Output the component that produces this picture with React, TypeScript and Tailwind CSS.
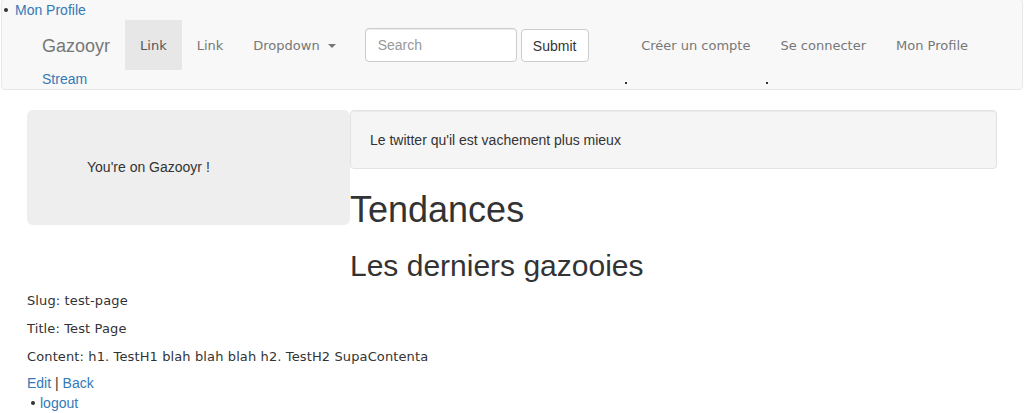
import React from "react";

const helv = { fontFamily: '"Liberation Sans", Arial, sans-serif' };
const verd = { fontFamily: '"DejaVu Sans", Verdana, sans-serif' };

export default function App() {
  return (
    <div className="w-[1024px] min-h-[413px] bg-white text-[#333] text-[14px] leading-[20px]" style={helv}>
      {/* Navbar */}
      <div className="mx-[1px] mb-[20px] h-[91px] -mt-[1px] border border-[#e7e7e7] bg-[#f8f8f8] rounded-[4px] flex flex-col">
        <div className="h-[20px] flex items-center pl-[1px]">
          <span className="w-[4px] h-[4px] rounded-full bg-[#333] ml-[1px]" />
          <a className="ml-[7px] text-[#337ab7] text-[14px] leading-[20px]">Mon Profile</a>
        </div>
        <div className="h-[50px] flex items-stretch pl-[25px]">
          <div className="px-[15px] pt-[1px] flex items-center text-[18px] text-[#777]">Gazooyr</div>
          <div className="flex items-stretch text-[13px]" style={verd}>
            <div className="px-[15px] pt-[1px] flex items-center bg-[#e7e7e7] text-[#555]">Link</div>
            <div className="px-[15px] pt-[1px] flex items-center text-[#777]">Link</div>
            <div className="px-[15px] pt-[1px] flex items-center text-[#777]">
              Dropdown
              <span className="ml-[8px] w-0 h-0 border-l-[4px] border-r-[4px] border-t-[4px] border-l-transparent border-r-transparent border-t-[#777]" />
            </div>
          </div>
          <div className="pl-[14px] flex items-center gap-[4px]">
            <input
              placeholder="Search"
              className="w-[152px] h-[34px] px-[12px] border border-[#ccc] rounded-[4px] bg-white text-[14px] placeholder:text-[#999] outline-none shadow-[inset_0_1px_1px_rgba(0,0,0,0.075)]"
              style={helv}
            />
            <button className="w-[68px] h-[33px] mt-[1px] border border-[#ccc] rounded-[4px] bg-white text-[14px] text-[#333]" style={helv}>
              Submit
            </button>
          </div>
          <div className="ml-auto mr-[39px] flex items-stretch text-[13px] text-[#777]" style={verd}>
            <div className="px-[15px] pt-[1px] flex items-center">Créer un compte</div>
            <div className="px-[15px] pt-[1px] flex items-center">Se connecter</div>
            <div className="px-[15px] pt-[1px] flex items-center">Mon Profile</div>
          </div>
        </div>
        <div className="h-[19px] flex items-center">
          <a className="ml-[40px] text-[#337ab7] leading-[18px] -mt-[1px]">Stream</a>
          <span className="ml-[538px] mt-[6px] w-[2px] h-[2px] bg-[#333]" />
          <span className="ml-[139px] mt-[6px] w-[2px] h-[2px] bg-[#333]" />
        </div>
      </div>

      {/* Content */}
      <div className="pl-[27px] w-[997px]">
        <div className="flex items-start">
          <div className="w-[323px] h-[115px] bg-[#eee] rounded-[6px] flex items-center pl-[60px] shrink-0">
            <span className="mt-[-1px]">You're on Gazooyr !</span>
          </div>
          <div className="flex-1">
            <div className="h-[59px] bg-[#f5f5f5] border border-[#e3e3e3] rounded-[4px] px-[19px] flex items-center shadow-[inset_0_1px_1px_rgba(0,0,0,0.05)]">
              Le twitter qu'il est vachement plus mieux
            </div>
            <h1 className="mt-[21px] text-[36px] leading-[40px] font-normal text-[#333]">Tendances</h1>
            <h2 className="mt-[19px] text-[30px] leading-[33px] font-normal text-[#333]">Les derniers gazooies</h2>
          </div>
        </div>
        <div className="mt-[10px] text-[13px] leading-[18px] tracking-[0.12px]" style={verd}>
          <p className="mb-[10px]">Slug: test-page</p>
          <p className="mb-[10px]">Title: Test Page</p>
          <p className="mb-[10px]">Content: h1. TestH1 blah blah blah h2. TestH2 SupaContenta</p>
        </div>
        <div className="leading-[20px] -mt-[3px]">
          <a className="text-[#337ab7]">Edit</a> | <a className="text-[#337ab7]">Back</a>
        </div>
        <div className="flex items-center leading-[20px]">
          <span className="ml-[4px] w-[4px] h-[4px] rounded-full bg-[#333]" />
          <a className="ml-[5px] text-[#337ab7]">logout</a>
        </div>
      </div>
    </div>
  );
}
